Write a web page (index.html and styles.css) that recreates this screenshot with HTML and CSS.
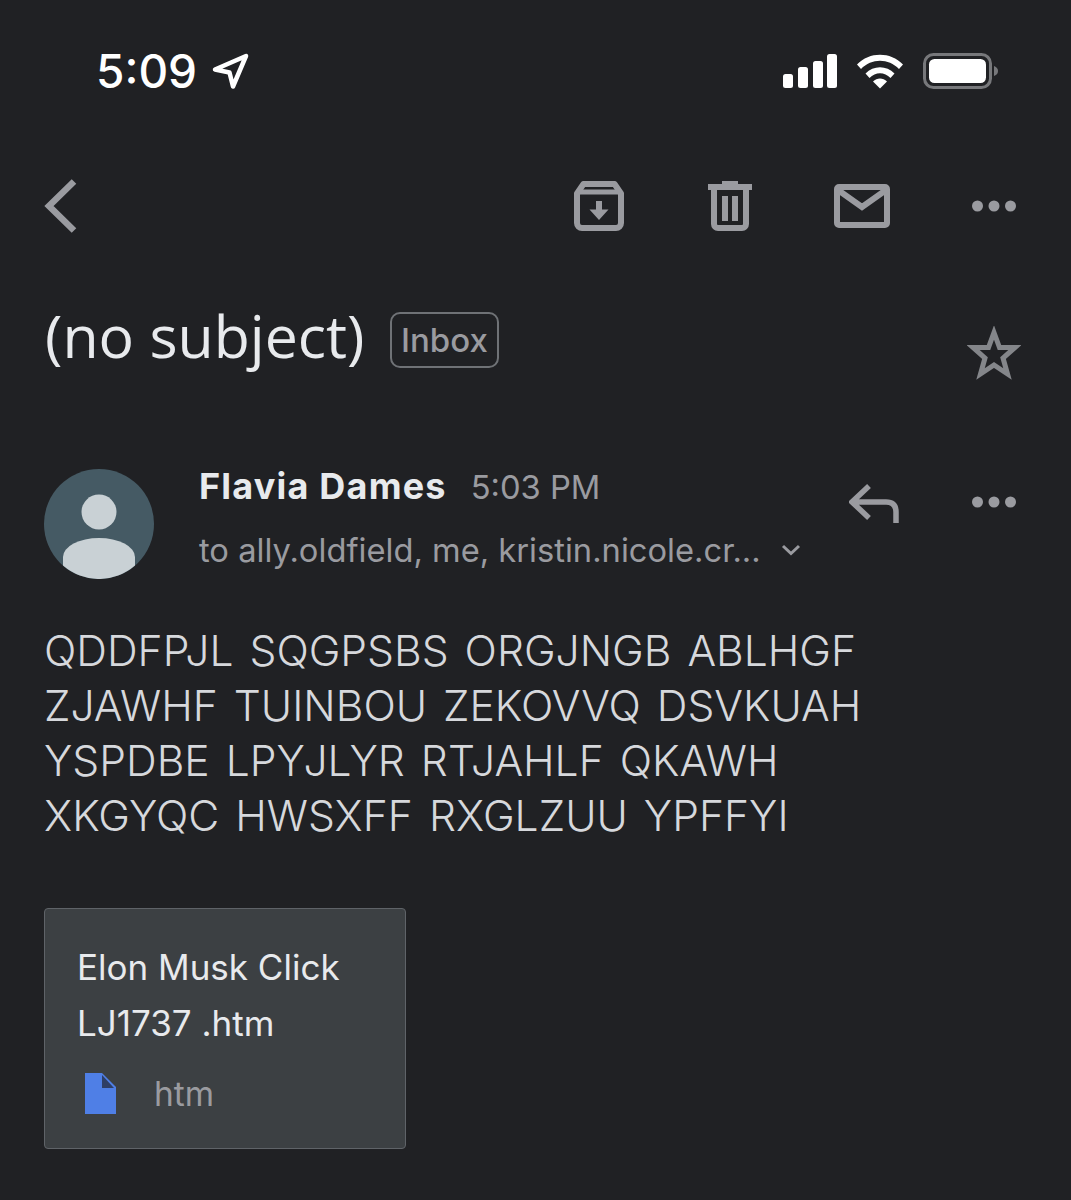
FILE: index.html
```html
<!DOCTYPE html>
<html lang="en">
<head>
    <meta charset="UTF-8">
    <meta name="viewport" content="width=device-width, initial-scale=1.0">
    <title>(no subject)</title>
    <link rel="stylesheet" href="styles.css">
</head>
<body>
    <div class="status-bar">
        <span class="clock">5:09</span>
        <svg class="location" width="38" height="38" viewBox="0 0 38 38"><path d="M3 17.500 34 4 21 34.500 17.500 20.500Z" fill="none" stroke="#fff" stroke-width="4.500" stroke-linejoin="round"/></svg>
        <div class="status-icons">
            <svg width="54" height="36" viewBox="0 0 54 36" fill="#fff">
                <rect x="0" y="21" width="10" height="14" rx="2.500"/>
                <rect x="15" y="14" width="10" height="21" rx="2.500"/>
                <rect x="30" y="8" width="10" height="27" rx="2.500"/>
                <rect x="44" y="1" width="10" height="34" rx="2.500"/>
            </svg>
            <svg width="46" height="36" viewBox="0 0 46 36" fill="#fff">
                <path d="M0 11.500C12.500-1.500 33.500-1.500 46 11.500L42 16C31.500 5 14.500 5 4 16Z"/>
                <path d="M8.500 20.500C16.500 12 29.500 12 37.500 20.500L33.500 25C27.500 18.500 18.500 18.500 12.500 25Z"/>
                <path d="M16 28.500C20 24.500 26 24.500 30 28.500L23 35.500Z"/>
            </svg>
            <svg width="76" height="36" viewBox="0 0 76 36">
                <rect x="1.500" y="1.500" width="66" height="33" rx="9" fill="none" stroke="#77787b" stroke-width="3"/>
                <rect x="6" y="6" width="57" height="24" rx="5.500" fill="#fff"/>
                <path d="M71 13C74 14 75 16 75 18S74 22 71 23Z" fill="#77787b"/>
            </svg>
        </div>
    </div>

    <div class="toolbar">
        <svg class="back-icon" width="33" height="54" viewBox="0 0 33 54"><path d="M30 2.500 5 27l25 24.500" fill="none" stroke="#9a9ba0" stroke-width="6.500"/></svg>
        <svg class="archive-icon" width="50" height="50" viewBox="0 0 50 50">
            <path d="M3 12.500 9.500 3h31L47 12.500V42a5 5 0 0 1-5 5H8a5 5 0 0 1-5-5Z" fill="none" stroke="#9a9ba0" stroke-width="6" stroke-linejoin="round"/>
            <path d="M3 11h44" stroke="#9a9ba0" stroke-width="5"/>
            <path d="M22 20h6v8.500h6.500L25 39l-9.500-10.500H22Z" fill="#9a9ba0"/>
        </svg>
        <svg class="trash-icon" width="44" height="50" viewBox="0 0 44 50">
            <path d="M14 0h16v3h14v6H0V3h14Z" fill="#9a9ba0"/>
            <path d="M6 8v35a4 4 0 0 0 4 4h24a4 4 0 0 0 4-4V8" fill="none" stroke="#9a9ba0" stroke-width="6"/>
            <path d="M14 15h6v25h-6ZM24 15h6v25h-6Z" fill="#9a9ba0"/>
        </svg>
        <svg class="mail-icon" width="56" height="44" viewBox="0 0 56 44">
            <rect x="3" y="3" width="50" height="38" rx="2" fill="none" stroke="#9a9ba0" stroke-width="6"/>
            <path d="M4 6 28 23 52 6" fill="none" stroke="#9a9ba0" stroke-width="6"/>
        </svg>
        <svg class="dots-icon" width="44" height="12" viewBox="0 0 44 12" fill="#9a9ba0"><circle cx="5.500" cy="6" r="5.500"/><circle cx="22" cy="6" r="5.500"/><circle cx="38.500" cy="6" r="5.500"/></svg>
    </div>

    <div class="subject-row">
        <h1 class="subject">(no subject)</h1>
        <span class="label">Inbox</span>
        <svg class="star-icon" width="54" height="54" viewBox="0 0 54 54"><path d="M27 6.500 32.500 21.500 48 21.500 36 32 40.500 48 27 39 13.500 48 18 32 6 21.500 21.500 21.500Z" fill="none" stroke="#84868a" stroke-width="5"/></svg>
    </div>

    <div class="sender-row">
        <svg class="avatar" width="110" height="110" viewBox="0 0 110 110">
            <circle cx="55" cy="55" r="55" fill="#455a64"/>
            <circle cx="55" cy="43" r="17.500" fill="#c9d1d5"/>
            <path d="M19 88A36 19 0 0 1 91 88V96.600A55 55 0 0 1 19 96.600Z" fill="#c9d1d5"/>
        </svg>
        <div class="sender-info">
            <div class="sender-top">
                <span class="sender-name">Flavia Dames</span>
                <span class="sender-time">5:03 PM</span>
            </div>
            <div class="recipients">
                <span>to ally.oldfield, me, kristin.nicole.cr...</span>
                <svg width="20" height="12" viewBox="0 0 20 12"><path d="M2 2 10 9.500 18 2" fill="none" stroke="#9a9ba0" stroke-width="3"/></svg>
            </div>
        </div>
        <svg class="reply-icon" width="50" height="40" viewBox="0 0 50 40"><path d="M20 2 3 18 20 34M3 18H37Q47 18 47 28V39" fill="none" stroke="#9a9ba0" stroke-width="5.500"/></svg>
        <svg class="dots-icon" width="44" height="12" viewBox="0 0 44 12" fill="#9a9ba0"><circle cx="5.500" cy="6" r="5.500"/><circle cx="22" cy="6" r="5.500"/><circle cx="38.500" cy="6" r="5.500"/></svg>
    </div>

    <div class="message">
        <div>QDDFPJL SQGPSBS ORGJNGB ABLHGF</div>
        <div>ZJAWHF TUINBOU ZEKOVVQ DSVKUAH</div>
        <div>YSPDBE LPYJLYR RTJAHLF QKAWH</div>
        <div>XKGYQC HWSXFF RXGLZUU YPFFYI</div>
    </div>

    <div class="attachment">
        <div class="attachment-name">Elon Musk Click LJ1737 .htm</div>
        <div class="attachment-type">
            <svg width="31" height="41" viewBox="0 0 31 41"><path d="M0 0H17L31 14V41H0Z" fill="#4f7fe6"/><path d="M17 2 29 15H17Z" fill="#2f3f66"/></svg>
            <span>htm</span>
        </div>
    </div>
</body>
</html>
```

FILE: styles.css
```css
body {
    margin: 0;
    padding: 0;
    background-color: #202124;
    font-family: Inter, Arial, sans-serif;
    color: #e8eaed;
}

.status-bar {
    display: flex;
    align-items: center;
    height: 142px;
    padding: 0 72px 0 96px;
    box-sizing: border-box;
}

.clock {
    font-size: 46px;
    font-weight: 500;
    color: #fff;
}

.location {
    margin-left: 15px;
}

.status-icons {
    display: flex;
    align-items: center;
    gap: 20px;
    margin-left: auto;
}

.toolbar {
    display: flex;
    align-items: center;
    height: 128px;
    padding: 0 55px 0 44px;
}

.back-icon {
    margin-right: auto;
}

.trash-icon {
    margin-left: 84px;
}

.mail-icon {
    margin-left: 82px;
}

.toolbar .dots-icon {
    margin-left: 82px;
}

.subject-row {
    display: flex;
    align-items: flex-start;
    height: 199px;
    padding: 35px 50px 0 45px;
    box-sizing: border-box;
}

.subject {
    margin: 0;
    font-family: "Open Sans", Arial, sans-serif;
    font-size: 59px;
    font-weight: 400;
    line-height: 60px;
    color: #e8eaed;
}

.label {
    margin: 7px 0 0 25px;
    padding: 0 9.500px;
    height: 52px;
    line-height: 52px;
    border: 2px solid #6f7276;
    border-radius: 10px;
    font-size: 33px;
    font-weight: 500;
    color: #9a9ba0;
}

.star-icon {
    margin-left: auto;
    margin-top: 21px;
}

.sender-row {
    display: flex;
    align-items: flex-start;
    padding: 0 55px 0 44px;
}

.avatar {
    flex-shrink: 0;
}

.sender-info {
    margin-left: 45px;
}

.sender-top {
    display: flex;
    align-items: baseline;
    gap: 24px;
    height: 40px;
    margin-top: -5px;
}

.sender-name {
    font-size: 36px;
    font-weight: 700;
    letter-spacing: 1.200px;
    color: #e8eaed;
}

.sender-time {
    font-size: 32.700px;
    color: #9a9ba0;
}

.recipients {
    display: flex;
    align-items: center;
    gap: 20px;
    margin-top: 26px;
    font-size: 32.700px;
    color: #9a9ba0;
}

.reply-icon {
    margin-left: auto;
    margin-top: 15px;
}

.sender-row .dots-icon {
    margin: 27px 0 0 73px;
}

.message {
    margin-top: 44px;
    padding-left: 44px;
    font-size: 42.600px;
    font-weight: 350;
    line-height: 55px;
    word-spacing: 4px;
    color: #d6d8dc;
}

.attachment {
    width: 362px;
    height: 241px;
    margin: 65px 0 0 44px;
    padding: 30px 32px 0;
    box-sizing: border-box;
    background-color: #3c4043;
    border: 1px solid #5f6368;
    border-radius: 4px;
}

.attachment-name {
    font-size: 35px;
    line-height: 56px;
    color: #e8eaed;
}

.attachment-type {
    display: flex;
    align-items: center;
    gap: 38px;
    margin: 22px 0 0 8px;
    font-size: 33.500px;
    color: #9a9ba0;
}
```
